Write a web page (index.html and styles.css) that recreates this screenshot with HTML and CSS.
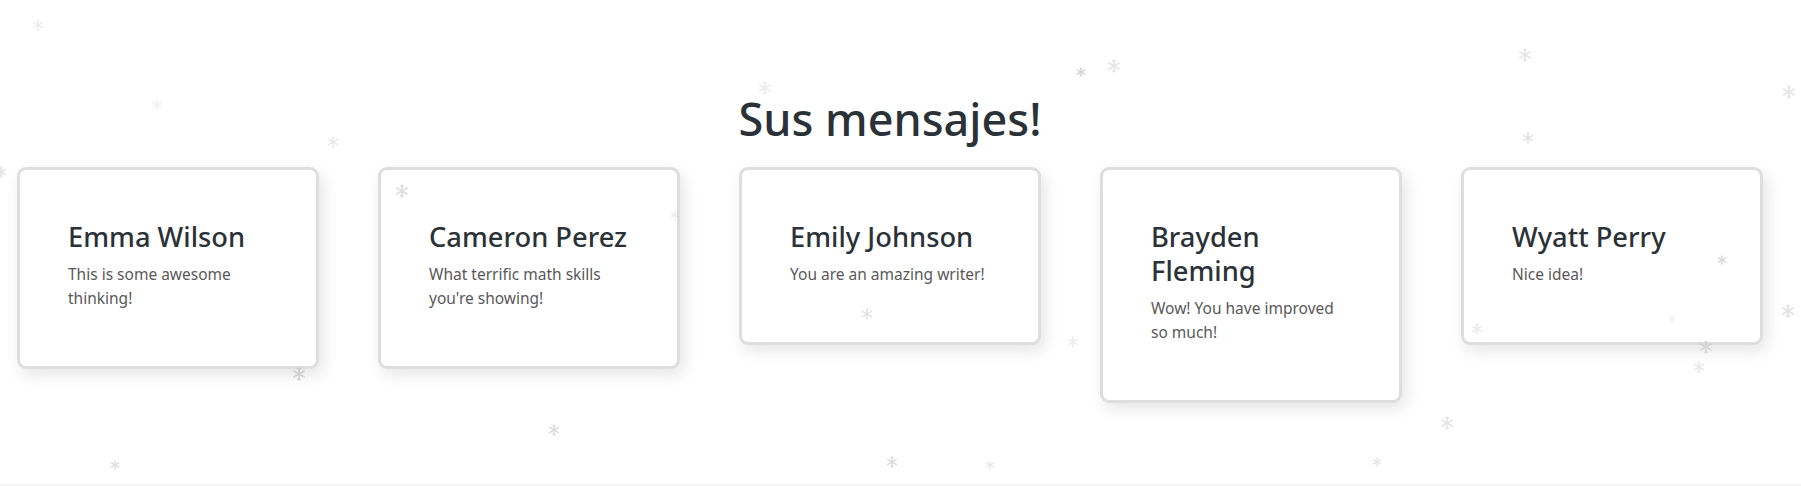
FILE: index.html
```html
<!DOCTYPE html>
<html lang="es">
<head>
<meta charset="utf-8">
<title>Sus mensajes!</title>
<link rel="stylesheet" href="styles.css">
</head>
<body>
<svg class="defs" width="0" height="0" aria-hidden="true">
  <symbol id="flake" viewBox="-10 -10 20 20">
    <g stroke="currentColor" stroke-width="2.4" stroke-linecap="round" fill="none">
      <line x1="0" y1="-8.5" x2="0" y2="8.5"/>
      <line x1="-7.4" y1="-4.25" x2="7.4" y2="4.25"/>
      <line x1="-7.4" y1="4.25" x2="7.4" y2="-4.25"/>
      <path d="M-2.2 -7.6 L0 -5.4 L2.2 -7.6 M-2.2 7.6 L0 5.4 L2.2 7.6" stroke-width="1.6"/>
    </g>
  </symbol>
</svg>
<main class="page">
  <h1 class="heading">Sus mensajes!</h1>
  <section class="cards">
    <article class="card">
      <h3 class="card-title">Emma Wilson</h3>
      <p class="card-text">This is some awesome thinking!</p>
    </article>
    <article class="card">
      <h3 class="card-title">Cameron Perez</h3>
      <p class="card-text">What terrific math skills you're showing!</p>
    </article>
    <article class="card">
      <h3 class="card-title">Emily Johnson</h3>
      <p class="card-text">You are an amazing writer!</p>
    </article>
    <article class="card">
      <h3 class="card-title">Brayden Fleming</h3>
      <p class="card-text">Wow! You have improved so much!</p>
    </article>
    <article class="card">
      <h3 class="card-title">Wyatt Perry</h3>
      <p class="card-text">Nice idea!</p>
    </article>
  </section>
</main>
<div class="snow" aria-hidden="true">
  <svg class="flake" style="left:32px;top:19px;width:12px;height:12px;opacity:.25"><use href="#flake"/></svg>
  <svg class="flake" style="left:151px;top:99px;width:12px;height:12px;opacity:.2"><use href="#flake"/></svg>
  <svg class="flake" style="left:327px;top:136px;width:12px;height:12px;opacity:.3"><use href="#flake"/></svg>
  <svg class="flake" style="left:395px;top:184px;width:14px;height:14px;opacity:.45"><use href="#flake"/></svg>
  <svg class="flake" style="left:292px;top:367px;width:14px;height:14px;opacity:.55"><use href="#flake"/></svg>
  <svg class="flake" style="left:110px;top:460px;width:10px;height:10px;opacity:.45"><use href="#flake"/></svg>
  <svg class="flake" style="left:548px;top:424px;width:12px;height:12px;opacity:.5"><use href="#flake"/></svg>
  <svg class="flake" style="left:670px;top:210px;width:10px;height:10px;opacity:.25"><use href="#flake"/></svg>
  <svg class="flake" style="left:758px;top:81px;width:14px;height:14px;opacity:.25"><use href="#flake"/></svg>
  <svg class="flake" style="left:861px;top:308px;width:12px;height:12px;opacity:.4"><use href="#flake"/></svg>
  <svg class="flake" style="left:886px;top:456px;width:12px;height:12px;opacity:.5"><use href="#flake"/></svg>
  <svg class="flake" style="left:985px;top:460px;width:10px;height:10px;opacity:.3"><use href="#flake"/></svg>
  <svg class="flake" style="left:1076px;top:67px;width:10px;height:10px;opacity:.6"><use href="#flake"/></svg>
  <svg class="flake" style="left:1107px;top:59px;width:14px;height:14px;opacity:.35"><use href="#flake"/></svg>
  <svg class="flake" style="left:1067px;top:336px;width:12px;height:12px;opacity:.25"><use href="#flake"/></svg>
  <svg class="flake" style="left:1440px;top:416px;width:14px;height:14px;opacity:.35"><use href="#flake"/></svg>
  <svg class="flake" style="left:1372px;top:457px;width:10px;height:10px;opacity:.35"><use href="#flake"/></svg>
  <svg class="flake" style="left:1518px;top:48px;width:14px;height:14px;opacity:.35"><use href="#flake"/></svg>
  <svg class="flake" style="left:1522px;top:132px;width:12px;height:12px;opacity:.4"><use href="#flake"/></svg>
  <svg class="flake" style="left:1782px;top:85px;width:14px;height:14px;opacity:.35"><use href="#flake"/></svg>
  <svg class="flake" style="left:1717px;top:255px;width:10px;height:10px;opacity:.55"><use href="#flake"/></svg>
  <svg class="flake" style="left:1781px;top:304px;width:14px;height:14px;opacity:.4"><use href="#flake"/></svg>
  <svg class="flake" style="left:1699px;top:340px;width:14px;height:14px;opacity:.4"><use href="#flake"/></svg>
  <svg class="flake" style="left:1693px;top:361px;width:12px;height:12px;opacity:.3"><use href="#flake"/></svg>
  <svg class="flake" style="left:1471px;top:323px;width:12px;height:12px;opacity:.3"><use href="#flake"/></svg>
  <svg class="flake" style="left:1668px;top:315px;width:8px;height:8px;opacity:.2"><use href="#flake"/></svg>
  <svg class="flake" style="left:-5px;top:166px;width:12px;height:12px;opacity:.4"><use href="#flake"/></svg>
</div>
</body>
</html>
```
FILE: styles.css
```css
html, body {
  margin: 0;
  padding: 0;
  background: #ffffff;
}

body {
  font-family: "Noto Sans", "Open Sans", "Liberation Sans", sans-serif;
  color: #2b3237;
  height: 486px;
  overflow: hidden;
  position: relative;
  box-sizing: border-box;
  border-bottom: 2px solid #f4f4f4;
}

.defs {
  position: absolute;
}

.page {
  width: 1780px;
  padding-top: 92px;
}

.heading {
  margin: 0 0 21px;
  text-align: center;
  font-size: 45px;
  font-weight: 500;
  line-height: 54px;
  color: #2b3237;
}

.cards {
  display: flex;
  align-items: flex-start;
  gap: 59px;
  padding-left: 17px;
}

.card {
  flex: 0 0 302px;
  box-sizing: border-box;
  border: 3px solid #dedede;
  border-radius: 9px;
  background: #fff;
  box-shadow: 4px 6px 16px rgba(0, 0, 0, 0.10);
  padding: 50px 48px 56px;
}

.card-title {
  margin: 0 0 8px;
  font-size: 27.3px;
  font-weight: 500;
  line-height: 34px;
  color: #2b3237;
}

.card-text {
  margin: 0;
  font-size: 15.5px;
  line-height: 24px;
  color: #595959;
}

.snow {
  position: absolute;
  inset: 0;
  pointer-events: none;
}

.flake {
  position: absolute;
  color: #b5b5b5;
  filter: blur(0.3px);
}
```
